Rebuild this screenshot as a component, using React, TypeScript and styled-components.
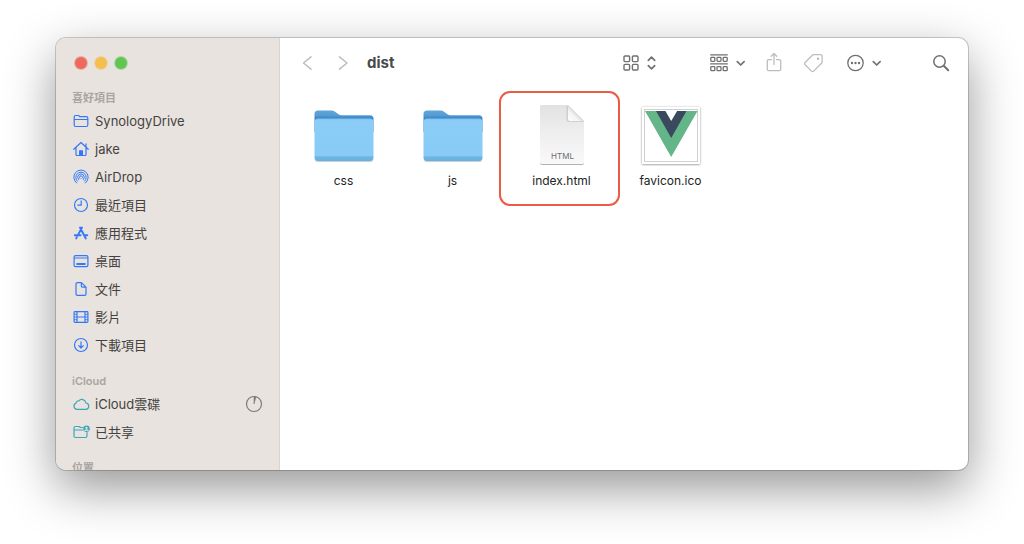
import React from "react";
import styled, { createGlobalStyle, css } from "styled-components";

const GlobalStyle = createGlobalStyle`
  * { box-sizing: border-box; }
  body {
    margin: 0;
    background: #fff;
    font-family: "Inter", "Noto Sans CJK TC", sans-serif;
    font-size: 13px;
    color: #444240;
  }
`;

const Desktop = styled.div`
  display: flex;
  height: 100vh;
  padding: 38px 56px 74px;
  overflow: hidden;
`;

const Window = styled.div`
  display: flex;
  flex: 1;
  min-width: 0;
  border-radius: 10px;
  overflow: hidden;
  background: #fff;
  box-shadow: 0 0 0 1px rgba(0, 0, 0, 0.18), 0 18px 50px rgba(0, 0, 0, 0.42);
`;

const Sidebar = styled.nav`
  flex: none;
  width: 224px;
  padding: 19px 16px 0;
  overflow: hidden;
  background: #e8e3df;
  border-right: 1px solid #dad5d1;
`;

const TrafficLights = styled.div`
  display: flex;
  gap: 8px;
  padding-left: 3px;
  margin-bottom: 21px;
`;

const Light = styled.button<{ $color: string }>`
  width: 12px;
  height: 12px;
  padding: 0;
  border: 0;
  border-radius: 50%;
  background: ${(p) => p.$color};
  box-shadow: 0 0 0 1px ${(p) => p.$color}66;
`;

const Section = styled.section`
  & + & {
    margin-top: 14px;
  }
`;

const SectionTitle = styled.h2`
  margin: 0;
  font-size: 11px;
  line-height: 17px;
  font-weight: 600;
  color: #aaa5a1;
`;

const PlaceList = styled.ul`
  margin: 0;
  padding: 0;
  list-style: none;
`;

const Place = styled.a<{ $tint: string }>`
  display: flex;
  align-items: center;
  gap: 5px;
  height: 28px;
  color: inherit;
  text-decoration: none;

  svg {
    flex: none;
    color: ${(p) => p.$tint};
  }
`;

const PlaceName = styled.span`
  flex: 1;
  line-height: 20px;
  white-space: nowrap;
`;

const Main = styled.main`
  display: flex;
  flex-direction: column;
  flex: 1;
  min-width: 0;
`;

const Toolbar = styled.header`
  display: flex;
  align-items: center;
  height: 50px;
  padding: 0 18px;
`;

const NavButtons = styled.div`
  display: flex;
  gap: 18px;
`;

const Title = styled.h1`
  flex: 1;
  margin: 0 0 0 15px;
  font-size: 15px;
  line-height: 20px;
  font-weight: 700;
  color: #4a4a4a;
`;

const Tools = styled.div`
  display: flex;
  align-items: center;
  gap: 20px;
`;

const ToolButton = styled.button<{ $muted?: boolean; $space?: number }>`
  display: flex;
  align-items: center;
  gap: 8px;
  padding: 0;
  margin-right: ${(p) => p.$space ?? 0}px;
  border: 0;
  background: none;
  color: ${(p) => (p.$muted ? "#bdbdbd" : "#707070")};
`;

const Files = styled.ul`
  display: flex;
  flex-wrap: wrap;
  margin: 0;
  padding: 14px 9px;
  list-style: none;
`;

const FileItem = styled.li<{ $marked?: boolean }>`
  position: relative;
  width: 109px;

  ${(p) =>
    p.$marked &&
    css`
      &::after {
        content: "";
        position: absolute;
        inset: -11px -4px -17px -8px;
        border: 2px solid #ec5b45;
        border-radius: 11px;
        pointer-events: none;
      }
    `}
`;

const FileButton = styled.button`
  display: flex;
  flex-direction: column;
  align-items: center;
  gap: 7px;
  width: 100%;
  padding: 0;
  border: 0;
  background: none;
  font: inherit;
  font-size: 12px;
  line-height: 16px;
  color: #222;
`;

const Glyph = ({
  w = 18,
  h = 18,
  sw = 1.2,
  children,
}: {
  w?: number;
  h?: number;
  sw?: number;
  children: React.ReactNode;
}) => (
  <svg
    width={w}
    height={h}
    viewBox={`0 0 ${w} ${h}`}
    fill="none"
    stroke="currentColor"
    strokeWidth={sw}
    strokeLinecap="round"
    strokeLinejoin="round"
    aria-hidden="true"
  >
    {children}
  </svg>
);

const icons = {
  folder: (
    <Glyph>
      <path d="M2.200 13V5q0-1.500 1.500-1.500h2.800l1.500 1.200h6.300q1.500 0 1.500 1.500V13q0 1.500-1.500 1.500H3.700Q2.200 14.500 2.200 13zM2.200 7.500h13.600" />
    </Glyph>
  ),
  home: (
    <Glyph>
      <path d="M1.800 9.300 9 2.500l7.200 6.800M4 7.600v6.900q0 1 1 1h8q1 0 1-1V7.600M14 6.800V3.900" />
      <path d="M7.600 15.500v-4.700h2.800v4.700z" fill="currentColor" />
    </Glyph>
  ),
  airdrop: (
    <Glyph sw={1}>
      <path d="M4.600 15A7.200 7.200 0 1 1 13.400 15" />
      <path d="M5.400 13.200A5.200 5.200 0 1 1 12.600 13.200" />
      <path d="M6.500 11.500A3.300 3.300 0 1 1 11.500 11.500" />
      <path d="M7.900 10.400A1.500 1.500 0 1 1 10.100 10.400" />
    </Glyph>
  ),
  clock: (
    <Glyph>
      <circle cx="9" cy="9" r="6.500" />
      <path d="M9.200 4.800v4.400H5.800" />
    </Glyph>
  ),
  apps: (
    <Glyph sw={1.9}>
      <path d="M8 3.500 13.800 14.500M10 3.500 6.300 10.400M2.800 11.300h5.800M12.300 11.300h3M4.800 13.200l-.6 1.200" />
    </Glyph>
  ),
  desktop: (
    <Glyph>
      <rect x="2.100" y="3.600" width="13.800" height="11" rx="1.400" />
      <path d="M2.500 6h13" />
      <path d="M5.200 12.100h7.600" strokeWidth="2" />
    </Glyph>
  ),
  doc: (
    <Glyph>
      <path d="M5 2.600h4.500L14 7.100v7q0 1.300-1.300 1.300H5.300Q4 15.400 4 14.100V3.900q0-1.300 1.300-1.300M9.400 2.800v3.300q0 1.100 1.100 1.100h3.300" />
    </Glyph>
  ),
  film: (
    <Glyph>
      <rect x="2.100" y="3.600" width="13.800" height="10.800" rx=".8" />
      <path d="M5 3.600v10.800M13 3.600v10.800M5 9h8" />
      <path d="M2.500 6.300h2M2.500 9h2M2.500 11.700h2M13.500 6.300h2M13.500 9h2M13.500 11.700h2" strokeWidth=".9" />
    </Glyph>
  ),
  download: (
    <Glyph>
      <circle cx="9" cy="9" r="6.500" />
      <path d="M9 5.800v6M6.700 9.700 9 12l2.300-2.300" />
    </Glyph>
  ),
  cloud: (
    <Glyph>
      <path d="M5 14.300a3.200 3.200 0 0 1-.9-6.200 2.400 2.400 0 0 1 2.700-2.300A4.100 4.100 0 0 1 13.900 8a3.200 3.200 0 0 1 .4 6.300z" />
    </Glyph>
  ),
  shared: (
    <Glyph>
      <path d="M10.500 4.500H8.300L7 3.500H3.500Q2 3.500 2 5v8q0 1.500 1.500 1.500h10Q15 14.500 15 13V9.500M2 7h8.500" />
      <circle cx="14.500" cy="5.800" r="3.300" fill="currentColor" stroke="none" />
      <circle cx="14.500" cy="4.900" r="1.100" fill="#e8e3df" stroke="none" />
      <path d="M12.900 7.700q1.600-1.800 3.200 0" stroke="#e8e3df" />
    </Glyph>
  ),
};

const Progress = () => (
  <svg width="18" height="18" viewBox="0 0 18 18" fill="none" stroke="#7e7a77" aria-hidden="true">
    <circle cx="9" cy="9" r="7.500" strokeWidth="1.200" />
    <path d="M9 9V1.500a7.500 7.500 0 0 1 2 .3z" fill="#7e7a77" strokeWidth=".6" />
  </svg>
);

const Chevron = () => (
  <Glyph w={9} h={18} sw={1.7}>
    <path d="M1.300 7.700 4.700 11l3.400-3.300" />
  </Glyph>
);

const FolderArt = ({ id }: { id: string }) => (
  <svg width="64" height="64" viewBox="0 0 64 64" aria-hidden="true">
    <defs>
      <linearGradient id={`${id}-back`} x1="0" y1="0" x2="0" y2="1">
        <stop offset="0" stopColor="#5fa6d8" />
        <stop offset=".22" stopColor="#559dd3" />
        <stop offset=".38" stopColor="#3a82c4" />
      </linearGradient>
      <linearGradient id={`${id}-front`} x1="0" y1="0" x2="0" y2="1">
        <stop offset="0" stopColor="#7dc4f2" />
        <stop offset=".06" stopColor="#8bcdf7" />
        <stop offset=".88" stopColor="#87cbf6" />
        <stop offset=".9" stopColor="#6fb6e2" />
        <stop offset="1" stopColor="#67b0df" />
      </linearGradient>
    </defs>
    <path d="M3 58.500q0 1.300 3 1.300h52q3 0 3-1.300z" fill="#b9c2c8" />
    <path
      d="M2.500 12Q2.500 8.500 6 8.500h13.500q2 0 3.500 1.200l3.500 2.600q1.300.9 3 .9H58q3.500 0 3.500 3.500V30h-59z"
      fill={`url(#${id}-back)`}
    />
    <path
      d="M2.500 20Q2.500 16.500 6 16.500h52q3.500 0 3.500 3.500v35.500q0 3.500-3.500 3.500H6q-3.500 0-3.500-3.500z"
      fill={`url(#${id}-front)`}
    />
  </svg>
);

const HtmlArt = () => (
  <svg width="64" height="64" viewBox="0 0 64 64" aria-hidden="true">
    <defs>
      <linearGradient id="paper" x1="0" y1="0" x2="0" y2="1">
        <stop offset="0" stopColor="#e2e2e2" />
        <stop offset=".5" stopColor="#efefef" />
        <stop offset="1" stopColor="#f9f9f9" />
      </linearGradient>
      <linearGradient id="fold" x1="0" y1="1" x2="1" y2="0">
        <stop offset="0" stopColor="#fff" />
        <stop offset=".35" stopColor="#f4f4f4" />
        <stop offset=".5" stopColor="#d8d8d8" />
      </linearGradient>
      <filter id="paper-shadow" x="-20%" y="-20%" width="140%" height="140%">
        <feDropShadow dx="0" dy="0.600" stdDeviation="0.700" floodOpacity=".5" />
      </filter>
    </defs>
    <path
      d="M12 3h26l16 16v41q0 2-2 2H12q-2 0-2-2V5q0-2 2-2z"
      fill="url(#paper)"
      filter="url(#paper-shadow)"
    />
    <path d="M36.500 3v14.500q0 2.500 2.500 2.500h15z" fill="#000" opacity=".1" />
    <path d="M38 3v13.700q0 2.300 2.300 2.300H54z" fill="url(#fold)" />
    <text x="32.500" y="57" textAnchor="middle" fontSize="8" fontFamily="Inter, sans-serif" fill="#6c6c6c">
      HTML
    </text>
  </svg>
);

const FaviconArt = () => (
  <svg width="64" height="64" viewBox="0 0 64 64" aria-hidden="true">
    <defs>
      <filter id="card-shadow" x="-20%" y="-20%" width="140%" height="140%">
        <feDropShadow dx="0" dy="0.600" stdDeviation="0.800" floodOpacity=".45" />
      </filter>
    </defs>
    <rect x="3" y="5" width="58" height="57" fill="#fff" filter="url(#card-shadow)" />
    <rect x="5.500" y="7.500" width="53" height="52" fill="#fff" stroke="#d0d0d0" />
    <path d="M6 9h52.500L32.200 55z" fill="#64b587" />
    <path d="M17 9h9.500l5.700 9.500L38 9h9.500L32.200 36z" fill="#3a495e" />
    <path d="M26.500 9H38l-5.800 10z" fill="#fff" />
  </svg>
);

const BLUE = "#3478f6";
const TEAL = "#3fa6b8";

type PlaceData = { name: string; icon: keyof typeof icons; syncing?: boolean };

const sections: { title: string; tint: string; places: PlaceData[] }[] = [
  {
    title: "喜好項目",
    tint: BLUE,
    places: [
      { name: "SynologyDrive", icon: "folder" },
      { name: "jake", icon: "home" },
      { name: "AirDrop", icon: "airdrop" },
      { name: "最近項目", icon: "clock" },
      { name: "應用程式", icon: "apps" },
      { name: "桌面", icon: "desktop" },
      { name: "文件", icon: "doc" },
      { name: "影片", icon: "film" },
      { name: "下載項目", icon: "download" },
    ],
  },
  {
    title: "iCloud",
    tint: TEAL,
    places: [
      { name: "iCloud雲碟", icon: "cloud", syncing: true },
      { name: "已共享", icon: "shared" },
    ],
  },
  { title: "位置", tint: BLUE, places: [] },
];

const files = [
  { name: "css", art: <FolderArt id="css" /> },
  { name: "js", art: <FolderArt id="js" /> },
  { name: "index.html", art: <HtmlArt />, marked: true },
  { name: "favicon.ico", art: <FaviconArt /> },
];

export default function App() {
  return (
    <>
      <GlobalStyle />
      <Desktop>
        <Window>
          <Sidebar>
            <TrafficLights>
              <Light $color="#ec6a5e" aria-label="Close" />
              <Light $color="#f4bf4f" aria-label="Minimize" />
              <Light $color="#61c554" aria-label="Zoom" />
            </TrafficLights>
            {sections.map((section) => (
              <Section key={section.title}>
                <SectionTitle>{section.title}</SectionTitle>
                <PlaceList>
                  {section.places.map((place) => (
                    <li key={place.name}>
                      <Place href="#" $tint={section.tint}>
                        {icons[place.icon]}
                        <PlaceName>{place.name}</PlaceName>
                        {place.syncing && <Progress />}
                      </Place>
                    </li>
                  ))}
                </PlaceList>
              </Section>
            ))}
          </Sidebar>
          <Main>
            <Toolbar>
              <NavButtons>
                <ToolButton $muted aria-label="Back">
                  <Glyph sw={1.5}>
                    <path d="M13 2.800 5.500 9l7.500 6.200" />
                  </Glyph>
                </ToolButton>
                <ToolButton $muted aria-label="Forward">
                  <Glyph sw={1.5}>
                    <path d="M5.500 2.800 13 9l-7.500 6.200" />
                  </Glyph>
                </ToolButton>
              </NavButtons>
              <Title>dist</Title>
              <Tools>
                <ToolButton aria-label="View as icons" $space={34}>
                  <Glyph w={16} sw={1.4}>
                    <rect x="1" y="2" width="5.600" height="5.600" rx="1" />
                    <rect x="9.400" y="2" width="5.600" height="5.600" rx="1" />
                    <rect x="1" y="10.400" width="5.600" height="5.600" rx="1" />
                    <rect x="9.400" y="10.400" width="5.600" height="5.600" rx="1" />
                  </Glyph>
                  <Glyph w={9} sw={1.7}>
                    <path d="M1.300 6.300 4.500 3.200l3.200 3.100M1.300 11.700l3.200 3.100 3.200-3.100" />
                  </Glyph>
                </ToolButton>
                <ToolButton aria-label="Group items">
                  <Glyph sw={1.3}>
                    <path d="M.7.800h16.600M.7 9.900h16.600" />
                    <rect x=".8" y="3.300" width="4" height="4" rx=".8" />
                    <rect x="7" y="3.300" width="4" height="4" rx=".8" />
                    <rect x="13.200" y="3.300" width="4" height="4" rx=".8" />
                    <rect x=".8" y="12.700" width="4" height="4" rx=".8" />
                    <rect x="7" y="12.700" width="4" height="4" rx=".8" />
                    <rect x="13.200" y="12.700" width="4" height="4" rx=".8" />
                  </Glyph>
                  <Chevron />
                </ToolButton>
                <ToolButton $muted aria-label="Share">
                  <Glyph h={22} sw={1.3}>
                    <path d="M6.500 7.700H3.800q-1.500 0-1.500 1.500v8q0 1.500 1.500 1.500h10.400q1.500 0 1.500-1.500v-8q0-1.500-1.500-1.500h-2.700M9 12.500V1.500M6.200 4.200 9 1.500l2.800 2.700" />
                  </Glyph>
                </ToolButton>
                <ToolButton $muted aria-label="Tags">
                  <Glyph w={24} h={20} sw={1.3}>
                    <path d="M10.800 1.600h6.400q1.900 0 1.900 1.900v5.200q0 1-.8 1.800l-7.600 7.600q-1.100 1.100-2.200 0L2.100 11.700q-1.100-1.100 0-2.200L9.300 2.200q.6-.6 1.500-.6z" />
                    <circle cx="15" cy="5.700" r=".6" />
                  </Glyph>
                </ToolButton>
                <ToolButton aria-label="More actions" $space={31}>
                  <Glyph w={17} sw={1.3}>
                    <circle cx="8.500" cy="9" r="7.700" />
                    <g fill="currentColor" stroke="none">
                      <circle cx="5" cy="9" r="1.200" />
                      <circle cx="8.500" cy="9" r="1.200" />
                      <circle cx="12" cy="9" r="1.200" />
                    </g>
                  </Glyph>
                  <Chevron />
                </ToolButton>
                <ToolButton aria-label="Search">
                  <Glyph sw={1.5}>
                    <circle cx="7.500" cy="7.500" r="5.700" />
                    <path d="M12 12l4.200 4.200" strokeWidth="2" />
                  </Glyph>
                </ToolButton>
              </Tools>
            </Toolbar>
            <Files>
              {files.map((file) => (
                <FileItem key={file.name} $marked={file.marked}>
                  <FileButton>
                    {file.art}
                    <span>{file.name}</span>
                  </FileButton>
                </FileItem>
              ))}
            </Files>
          </Main>
        </Window>
      </Desktop>
    </>
  );
}
